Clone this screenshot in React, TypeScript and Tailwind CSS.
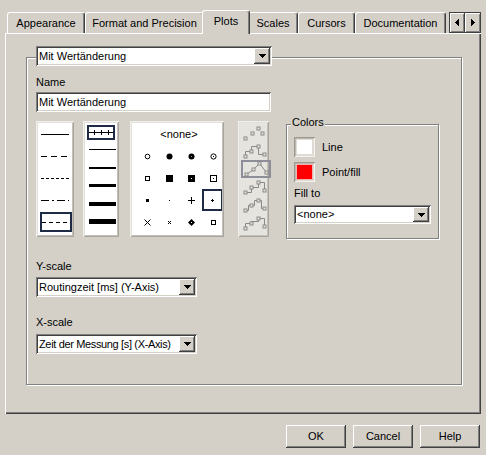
import React from "react";

const raised =
  "shadow-[inset_-1px_-1px_#404040,inset_1px_1px_#ffffff,inset_-2px_-2px_#808080,inset_2px_2px_#d4d0c8]";
const sunken =
  "shadow-[inset_1px_1px_#808080,inset_-1px_-1px_#ffffff,inset_2px_2px_#404040,inset_-2px_-2px_#d4d0c8]";
const etched = "border border-[#808080] shadow-[1px_1px_0_#ffffff,inset_1px_1px_0_#ffffff]";
const softFrame =
  "shadow-[inset_1px_1px_#f2f0ec,inset_-1px_-1px_#a8a59e,inset_2px_2px_#e2e0da,inset_-2px_-2px_#c4c1ba]";

function DownArrow() {
  return (
    <svg width="7" height="4" viewBox="0 0 7 4" shapeRendering="crispEdges">
      <path d="M0 0h7v1H0z M1 1h5v1H1z M2 2h3v1H2z M3 3h1v1H3z" fill="#000" />
    </svg>
  );
}

function Combo({ text, cls, textCls = "" }: { text: string; cls: string; textCls?: string }) {
  return (
    <div className={`${cls} bg-white ${sunken} flex items-stretch p-[2px] shrink-0`}>
      <span className={`flex-1 pl-[1px] flex items-center whitespace-nowrap overflow-hidden ${textCls}`}>{text}</span>
      <div className={`w-[16px] shrink-0 bg-[#d4d0c8] ${raised} flex items-center justify-center`}>
        <DownArrow />
      </div>
    </div>
  );
}

function Tab({ label, cls, selected }: { label: string; cls: string; selected?: boolean }) {
  if (selected) {
    return (
      <div
        className={`${cls} relative z-10 -mx-[2px] -mb-[1px] h-[24px] bg-[#d4d0c8] border-t border-l border-r border-t-white border-l-white border-r-[#404040] rounded-t-[3px] shadow-[inset_-1px_0_#808080] flex items-center justify-center pb-[2px]`}
      >
        {label}
      </div>
    );
  }
  return (
    <div
      className={`${cls} h-[21px] border-t border-l border-r border-t-white border-l-white border-r-[#404040] rounded-t-[3px] shadow-[inset_-1px_0_#808080] flex items-center justify-center`}
    >
      {label}
    </div>
  );
}

function M({ children }: { children: React.ReactNode }) {
  return (
    <svg width="9" height="9" viewBox="0 0 9 9" shapeRendering="crispEdges">
      {children}
    </svg>
  );
}

const markers: React.ReactNode[] = [
  <M><circle cx="4.5" cy="4.5" r="2.3" fill="none" stroke="#000" strokeWidth="1" shapeRendering="auto" /></M>,
  <M><circle cx="4.5" cy="4.5" r="3" fill="#000" shapeRendering="auto" /></M>,
  <M><circle cx="4.5" cy="4.5" r="3" fill="#000" shapeRendering="auto" /><rect x="4" y="4" width="1" height="1" fill="#999" /></M>,
  <M><circle cx="4.5" cy="4.5" r="2.6" fill="none" stroke="#000" strokeWidth="1" shapeRendering="auto" /><rect x="4" y="4" width="1" height="1" fill="#000" /></M>,
  <M><rect x="2.5" y="2.5" width="4" height="4" fill="none" stroke="#000" /></M>,
  <M><rect x="1" y="1" width="7" height="7" fill="#000" /></M>,
  <M><rect x="1" y="1" width="7" height="7" fill="#000" /><rect x="4" y="4" width="1" height="1" fill="#fff" /></M>,
  <M><rect x="1.5" y="1.5" width="6" height="6" fill="none" stroke="#000" /><rect x="4" y="4" width="1" height="1" fill="#000" /></M>,
  <M><rect x="3" y="3" width="3" height="3" fill="#000" /></M>,
  <M><rect x="4" y="4" width="1" height="1" fill="#000" /></M>,
  <M><rect x="1" y="4" width="7" height="1" fill="#000" /><rect x="4" y="1" width="1" height="7" fill="#000" /></M>,
  <M><rect x="3" y="4" width="3" height="1" fill="#000" /><rect x="4" y="3" width="1" height="3" fill="#000" /></M>,
  <M><path d="M1.5 1.5 L7.5 7.5 M7.5 1.5 L1.5 7.5" stroke="#000" strokeWidth="1" shapeRendering="auto" /></M>,
  <M><path d="M3 3 L6 6 M6 3 L3 6" stroke="#000" strokeWidth="1" shapeRendering="auto" /></M>,
  <M><polygon points="4.5,1 8,4.5 4.5,8 1,4.5" fill="#000" shapeRendering="auto" /><rect x="4" y="4" width="1" height="1" fill="#fff" /></M>,
  <M><rect x="2.5" y="2.5" width="4" height="4" fill="none" stroke="#000" /></M>,
];

function LineItem({ dash, selected }: { dash?: string; selected?: boolean }) {
  return (
    <div className="h-[22px] px-[2px] py-[1px] flex">
      <div
        className={`flex-1 flex items-center justify-center ${selected ? "border-2 border-[#1f2a46]" : ""}`}
      >
        <svg width="28" height="3" viewBox="0 0 28 3" shapeRendering="crispEdges">
          <line x1="0" y1="1.5" x2="28" y2="1.5" stroke="#000" strokeWidth="1" strokeDasharray={dash} />
        </svg>
      </div>
    </div>
  );
}

function WidthItem({ w }: { w: number }) {
  return (
    <div className="h-[18px] flex items-center pl-[4px]">
      <svg width="27" height="6" viewBox="0 0 27 6" shapeRendering="crispEdges">
        <rect x="0" y={3 - Math.ceil(w / 2)} width="27" height={w} fill="#000" />
      </svg>
    </div>
  );
}

const sq = (x: number, y: number, k: string) => (
  <rect key={k} x={x - 1.5} y={y - 1.5} width="3" height="3" fill="#e6e4df" stroke="#8a8a8a" strokeWidth="1" />
);

function Interp({ path, pts }: { path?: string; pts: [number, number][] }) {
  return (
    <svg width="26" height="16" viewBox="0 0 26 16">
      {path && <path d={path} fill="none" stroke="#8a8a8a" strokeWidth="1" />}
      {pts.map((p, i) => sq(p[0], p[1], String(i)))}
    </svg>
  );
}

const interps: { path?: string; pts: [number, number][] }[] = [
  { pts: [[17.5, 3.5], [11.5, 8.5], [21.5, 8.5], [4.5, 13.5]] },
  { path: "M4.5 13.5 V8.5 H10.5 V3.5 H17.5 V11.5 H23.5", pts: [[4.5, 13.5], [10.5, 8.5], [17.5, 3.5], [23.5, 11.5]] },
  { path: "M3.5 13.5 L10.5 8.5 L16.5 2.5 L23.5 11.5", pts: [[3.5, 13.5], [10.5, 8.5], [16.5, 2.5], [23.5, 11.5]] },
  { path: "M4.5 13.5 H10.5 V8.5 H17.5 V3.5 H23.5 V11.5", pts: [[4.5, 13.5], [10.5, 8.5], [17.5, 3.5], [23.5, 11.5]] },
  { path: "M4.5 13.5 H7.5 V8.5 H13.5 V3.5 H20.5 V11.5 H23.5", pts: [[4.5, 13.5], [10.5, 8.5], [17.5, 3.5], [23.5, 11.5]] },
  { path: "M4.5 13.5 V8.5 H10.5 V6.5 H17.5 V3.5 H23.5 V11.5", pts: [[4.5, 13.5], [10.5, 8.5], [17.5, 3.5], [23.5, 11.5]] },
];

function Button({ label }: { label: string }) {
  return (
    <div className={`w-[60px] h-[23px] ${raised} flex items-center justify-center`}>{label}</div>
  );
}

export default function App() {
  return (
    <div className="w-[486px] h-[455px] bg-[#d4d0c8] text-black text-[11px] leading-[13px] font-['Liberation_Sans',Arial,sans-serif] overflow-hidden select-none">
      {/* Tab strip */}
      <div className="flex items-end h-[33px] pl-[7px] pr-[5px]">
        <Tab label="Appearance" cls="w-[78px]" />
        <Tab label="Format and Precision" cls="w-[119px]" />
        <Tab label="Plots" cls="w-[48px]" selected />
        <Tab label="Scales" cls="w-[50px]" />
        <Tab label="Cursors" cls="w-[57px]" />
        <Tab label="Documentation" cls="w-[91px]" />
        <div className="ml-auto flex">
          <div className={`w-[16px] h-[21px] border border-[#404040] shadow-[inset_1px_1px_#ffffff,inset_-1px_-1px_#808080] flex items-center justify-center`}>
            <svg width="4" height="7" viewBox="0 0 4 7" shapeRendering="crispEdges">
              <path d="M3 0h1v7H3z M2 1h1v5H2z M1 2h1v3H1z M0 3h1v1H0z" fill="#000" />
            </svg>
          </div>
          <div className={`w-[16px] h-[21px] border border-l-0 border-[#404040] shadow-[inset_1px_1px_#ffffff,inset_-1px_-1px_#808080] flex items-center justify-center`}>
            <svg width="4" height="7" viewBox="0 0 4 7" shapeRendering="crispEdges">
              <path d="M0 0h1v7H0z M1 1h1v5H1z M2 2h1v3H2z M3 3h1v1H3z" fill="#000" />
            </svg>
          </div>
        </div>
      </div>

      {/* Tab panel */}
      <div className="mx-[5px] h-[381px] shadow-[inset_1px_1px_#ffffff,inset_-1px_-1px_#404040,inset_-2px_-2px_#808080] pt-[24px] pl-[21px]">
        <div className={`w-[436px] h-[328px] ${etched} flex flex-col pl-[9px]`}>
          <Combo text="Mit Wertänderung" cls="-mt-[12px] w-[236px] h-[20px]" />
          <div className="mt-[10px] h-[13px]">Name</div>
          <div className={`mt-[3px] w-[235px] h-[20px] bg-white ${sunken} flex items-center pl-[3px]`}>
            Mit Wertänderung
          </div>

          {/* Plot style row */}
          <div className="mt-[9px] h-[117px] flex items-start">
            {/* Line style */}
            <div className={`w-[38px] h-[116px] bg-[#eceae6] ${softFrame} p-[2px]`}>
              <div className="bg-white h-full">
                <LineItem />
                <LineItem dash="6 4" />
                <LineItem dash="3 2" />
                <LineItem dash="8 3 2 3" />
                <LineItem dash="4 3" selected />
              </div>
            </div>

            {/* Line width */}
            <div className={`ml-[9px] w-[36px] h-[116px] bg-[#eceae6] ${softFrame} p-[2px]`}>
              <div className="bg-white h-full">
                <div className="h-[18px] px-[2px] pt-[2px] pb-[1px] flex">
                  <div className="flex-1 border-2 border-[#1f2a46] flex items-center justify-center">
                    <svg width="24" height="7" viewBox="0 0 24 7" shapeRendering="crispEdges">
                      <rect x="0" y="3" width="24" height="1" fill="#000" />
                      <rect x="5" y="1" width="1" height="5" fill="#000" />
                      <rect x="12" y="1" width="1" height="5" fill="#000" />
                      <rect x="19" y="1" width="1" height="5" fill="#000" />
                    </svg>
                  </div>
                </div>
                <WidthItem w={1} />
                <WidthItem w={2} />
                <WidthItem w={3} />
                <WidthItem w={4} />
                <WidthItem w={5} />
              </div>
            </div>

            {/* Point style */}
            <div className={`ml-[11px] w-[94px] h-[116px] bg-[#eceae6] ${softFrame} p-[2px]`}>
              <div className="bg-white h-full overflow-hidden">
                <div className="h-[22px] flex items-center justify-center pl-[4px]">&lt;none&gt;</div>
                <div className="grid grid-cols-[repeat(4,22px)] auto-rows-[22px] pl-[4px]">
                  {markers.map((m, i) => (
                    <div
                      key={i}
                      className={`flex items-center justify-center ${i === 11 ? "border-2 border-[#1f2a46] w-[21px]" : ""}`}
                    >
                      {m}
                    </div>
                  ))}
                </div>
              </div>
            </div>

            {/* Interpolation */}
            <div className={`ml-[14px] w-[31px] h-[116px] bg-[#dcd9d3] ${softFrame} p-[2px]`}>
              <div className="bg-[#e6e4df] h-full pt-[1px]">
                {interps.map((it, i) => (
                  <div key={i} className="h-[18px] px-[1px] flex">
                    <div
                      className={`flex-1 flex items-center justify-center ${i === 2 ? "border-2 border-[#8e8e9a]" : ""}`}
                    >
                      <Interp path={it.path} pts={it.pts} />
                    </div>
                  </div>
                ))}
              </div>
            </div>

            {/* Colors */}
            <div className={`ml-[17px] mt-[3px] w-[153px] h-[115px] ${etched} flex flex-col pl-[7px]`}>
              <div className="-mt-[9px] -ml-[3px] px-[1px] w-fit h-[13px] bg-[#d4d0c8]">Colors</div>
              <div className="mt-[8px] flex items-center h-[20px]">
                <div className="w-[21px] h-[20px] p-[3px] bg-[#dedbd5] shadow-[inset_1px_1px_#9c988f,inset_-1px_-1px_#f4f2ee,inset_2px_2px_#bcb8b0]">
                  <div className="w-full h-full bg-white" />
                </div>
                <span className="ml-[7px]">Line</span>
              </div>
              <div className="mt-[5px] flex items-center h-[20px]">
                <div className="w-[21px] h-[20px] p-[3px] bg-[#dedbd5] shadow-[inset_1px_1px_#9c988f,inset_-1px_-1px_#f4f2ee,inset_2px_2px_#bcb8b0]">
                  <div className="w-full h-full bg-[#ff0000] shadow-[0_0_0_1px_#f0b4ac]" />
                </div>
                <span className="ml-[7px]">Point/fill</span>
              </div>
              <div className="mt-[5px] h-[13px]">Fill to</div>
              <Combo text="<none>" cls="mt-[5px] w-[137px] h-[19px]" />
            </div>
          </div>

          <div className="mt-[22px] h-[13px]">Y-scale</div>
          <Combo text="Routingzeit [ms] (Y-Axis)" cls="mt-[4px] w-[161px] h-[20px]" />
          <div className="mt-[19px] h-[13px]">X-scale</div>
          <Combo
            text="Zeit der Messung [s] (X-Axis)"
            cls="mt-[5px] w-[161px] h-[20px]"
            textCls="tracking-[-0.35px]"
          />
        </div>
      </div>

      {/* Footer buttons */}
      <div className="mt-[11px] flex justify-end gap-[7px] pr-[6px]">
        <Button label="OK" />
        <Button label="Cancel" />
        <Button label="Help" />
      </div>
    </div>
  );
}
